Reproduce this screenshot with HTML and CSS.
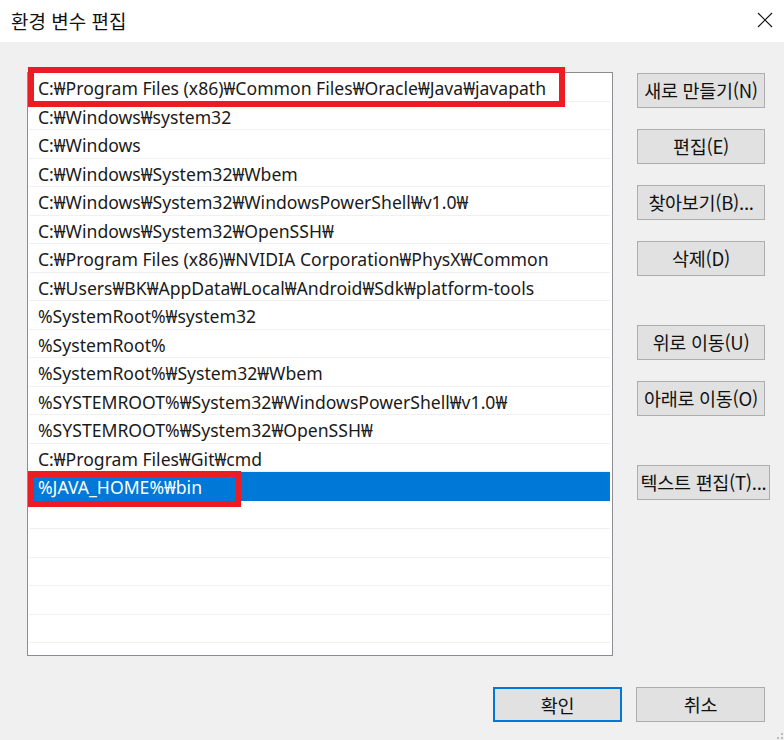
FILE: index.html
```html
<!DOCTYPE html>
<html lang="ko">
<head>
<meta charset="utf-8">
<title>환경 변수 편집</title>
<link rel="stylesheet" href="styles.css">
</head>
<body>
<div class="dialog">
  <div class="titlebar">
    <span class="title">환경 변수 편집</span>
    <svg class="close" width="16" height="16" viewBox="0 0 16 16"><path d="M1 1L15 15M15 1L1 15" stroke="#111" stroke-width="1.1" fill="none"/></svg>
  </div>
  <div class="content">
    <div class="main">
      <div class="list">
        <div class="row">C:₩Program Files (x86)₩Common Files₩Oracle₩Java₩javapath</div>
        <div class="row">C:₩Windows₩system32</div>
        <div class="row">C:₩Windows</div>
        <div class="row">C:₩Windows₩System32₩Wbem</div>
        <div class="row">C:₩Windows₩System32₩WindowsPowerShell₩v1.0₩</div>
        <div class="row">C:₩Windows₩System32₩OpenSSH₩</div>
        <div class="row">C:₩Program Files (x86)₩NVIDIA Corporation₩PhysX₩Common</div>
        <div class="row">C:₩Users₩BK₩AppData₩Local₩Android₩Sdk₩platform-tools</div>
        <div class="row">%SystemRoot%₩system32</div>
        <div class="row">%SystemRoot%</div>
        <div class="row">%SystemRoot%₩System32₩Wbem</div>
        <div class="row">%SYSTEMROOT%₩System32₩WindowsPowerShell₩v1.0₩</div>
        <div class="row">%SYSTEMROOT%₩System32₩OpenSSH₩</div>
        <div class="row">C:₩Program Files₩Git₩cmd</div>
        <div class="row selected">%JAVA_HOME%₩bin</div>
        <div class="row"></div>
        <div class="row"></div>
        <div class="row"></div>
        <div class="row"></div>
        <div class="row"></div>
        <div class="mark mark-top"></div>
        <div class="mark mark-sel"></div>
      </div>
      <div class="side">
        <button class="btn">새로 만들기(N)</button>
        <button class="btn">편집(E)</button>
        <button class="btn">찾아보기(B)...</button>
        <button class="btn">삭제(D)</button>
        <button class="btn group">위로 이동(U)</button>
        <button class="btn">아래로 이동(O)</button>
        <button class="btn group wide">텍스트 편집(T)...</button>
      </div>
    </div>
    <div class="footer">
      <button class="btn default">확인</button>
      <button class="btn">취소</button>
    </div>
  </div>
  <div class="grip">
    <span></span><span></span><span></span>
  </div>
</div>
</body>
</html>
```
FILE: styles.css
```css
* { box-sizing: border-box; }
html, body { margin: 0; padding: 0; }
body {
  width: 784px;
  height: 740px;
  background: #f0f0f0;
  font-family: "Noto Sans", "Noto Sans CJK KR", sans-serif;
  color: #000;
  overflow: hidden;
}
.dialog {
  position: relative;
  width: 784px;
  height: 740px;
  display: flex;
  flex-direction: column;
}
.titlebar {
  height: 42px;
  background: #fff;
  display: flex;
  align-items: center;
  justify-content: space-between;
  padding: 0 12px 0 11px;
  flex-shrink: 0;
}
.title {
  font-family: "Noto Sans CJK KR", sans-serif;
  font-size: 19px;
  color: #111;
  margin-top: -1px;
}
.close { margin-right: -1px; margin-top: -2px; }
.content {
  padding: 30px 0 0 27px;
  display: flex;
  flex-direction: column;
}
.main {
  display: flex;
  gap: 24px;
}
.list {
  position: relative;
  width: 586px;
  height: 584px;
  background: #fff;
  border: 1px solid #8a8e93;
  padding: 0 2px 0 1px;
  overflow: visible;
}
.row {
  height: 28.5px;
  border-bottom: 1px solid #f0f0f0;
  padding-left: 9px;
  font-size: 17.6px;
  line-height: 31px;
  white-space: nowrap;
  color: #1a1a1a;
}
.row.selected {
  background: #0078d7;
  color: #fff;
  border-bottom-color: #0078d7;
}
.mark {
  position: absolute;
  border: 6px solid #ec1c24;
}
.mark-top { left: 0; top: -6px; width: 537px; height: 40px; }
.mark-sel { left: 0; top: 398px; width: 213px; height: 36px; }
.side {
  display: flex;
  flex-direction: column;
  padding-top: 1px;
}
.btn {
  width: 128px;
  height: 35px;
  background: #e1e1e1;
  border: 1px solid #adadad;
  font-family: "Noto Sans CJK KR", sans-serif;
  font-size: 18.5px;
  line-height: 33px;
  color: #111;
  padding: 0;
  margin: 0 0 21px 0;
  white-space: nowrap;
  letter-spacing: -0.3px;
  overflow: visible;
}
.btn.group { margin-top: 28px; }
.btn.wide { width: 133px; }
.footer {
  display: flex;
  justify-content: flex-end;
  gap: 14px;
  padding-right: 19px;
  margin-top: 31px;
}
.footer .btn { width: 129px; margin: 0; }
.btn.default { border: 2px solid #0078d7; }
.grip {
  position: absolute;
  right: 1px;
  bottom: 1px;
  width: 10px;
  height: 10px;
}
.grip span {
  position: absolute;
  width: 2px;
  height: 2px;
  background: #bcbcbc;
}
.grip span:nth-child(1) { right: 0; bottom: 0; }
.grip span:nth-child(2) { right: 4px; bottom: 0; }
.grip span:nth-child(3) { right: 0; bottom: 4px; }
```
